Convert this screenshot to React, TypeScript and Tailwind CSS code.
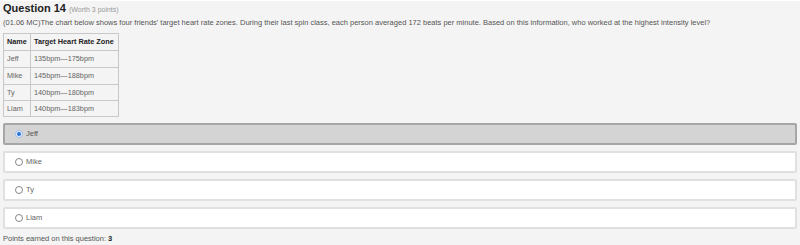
import React from 'react'

const ROWS = [
  { name: 'Jeff', zone: '135bpm—175bpm', h: 'h-[17px]' },
  { name: 'Mike', zone: '145bpm—188bpm', h: 'h-[17px]' },
  { name: 'Ty', zone: '140bpm—180bpm', h: 'h-[16px]' },
  { name: 'Liam', zone: '140bpm—183bpm', h: 'h-[16px]' },
]

const CHOICES = ['Jeff', 'Mike', 'Ty', 'Liam']

function Radio({ checked }: { checked: boolean }) {
  return (
    <span
      className={`inline-flex items-center justify-center w-[8px] h-[8px] rounded-full border ${
        checked ? 'border-[#9cbde9] bg-[#eaf2fc]' : 'border-[#888] bg-white'
      }`}
    >
      {checked && <span className="w-[4px] h-[4px] rounded-full bg-[#2b74d6]" />}
    </span>
  )
}

export default function App() {
  return (
    <div
      className="w-[800px] h-[245px] bg-[#f4f4f4] text-[#333] overflow-hidden border-t border-white"
      style={{ fontFamily: '"Liberation Sans", Arial, sans-serif' }}
    >
      {/* Header */}
      <div className="px-[3px] leading-[12px] whitespace-nowrap">
        <span className="text-[11px] font-bold text-[#222]">Question 14</span>
        <span className="text-[7px] text-[#999] ml-[3px]">(Worth 3 points)</span>
      </div>

      {/* Prompt */}
      <p className="px-[3px] mt-[2px] text-[7.5px] leading-[10px] text-[#555] whitespace-nowrap">
        (01.06 MC)The chart below shows four friends' target heart rate zones. During their last spin class, each person averaged 172 beats per minute. Based on this information, who worked at the highest intensity level?
      </p>

      {/* Table */}
      <table className="ml-[3px] mt-[5px] border-collapse text-[7.3px] leading-[8px] whitespace-nowrap">
        <thead>
          <tr className="h-[17px]">
            <th className="border border-[#c8c8c8] px-[3px] py-0 text-left font-bold text-[#222] w-[27px]">Name</th>
            <th className="border border-[#c8c8c8] px-[3px] py-0 text-left font-bold text-[#222] w-[88px]">Target Heart Rate Zone</th>
          </tr>
        </thead>
        <tbody>
          {ROWS.map(r => (
            <tr key={r.name} className={r.h}>
              <td className="border border-[#c8c8c8] px-[3px] py-0 text-[#666]">{r.name}</td>
              <td className="border border-[#c8c8c8] px-[3px] py-0 text-[#666]">{r.zone}</td>
            </tr>
          ))}
        </tbody>
      </table>

      {/* Choices */}
      <div className="mx-[3px] mt-[6px] flex flex-col gap-[6px]">
        {CHOICES.map((c, i) => (
          <div
            key={c}
            className={`h-[22px] flex items-center gap-[3px] pl-[10px] rounded-[2px] text-[7.5px] ${
              i === 0
                ? 'bg-[#d4d4d4] border-2 border-[#a6a6a6] text-[#555]'
                : 'bg-white border-2 border-[#e0e0e0] text-[#666]'
            }`}
          >
            <Radio checked={i === 0} />
            <span>{c}</span>
          </div>
        ))}
      </div>

      {/* Footer */}
      <p className="px-[3px] mt-[5px] text-[7.5px] leading-[10px] text-[#555] whitespace-nowrap">
        Points earned on this question: <span className="font-bold text-[#222]">3</span>
      </p>
    </div>
  )
}
